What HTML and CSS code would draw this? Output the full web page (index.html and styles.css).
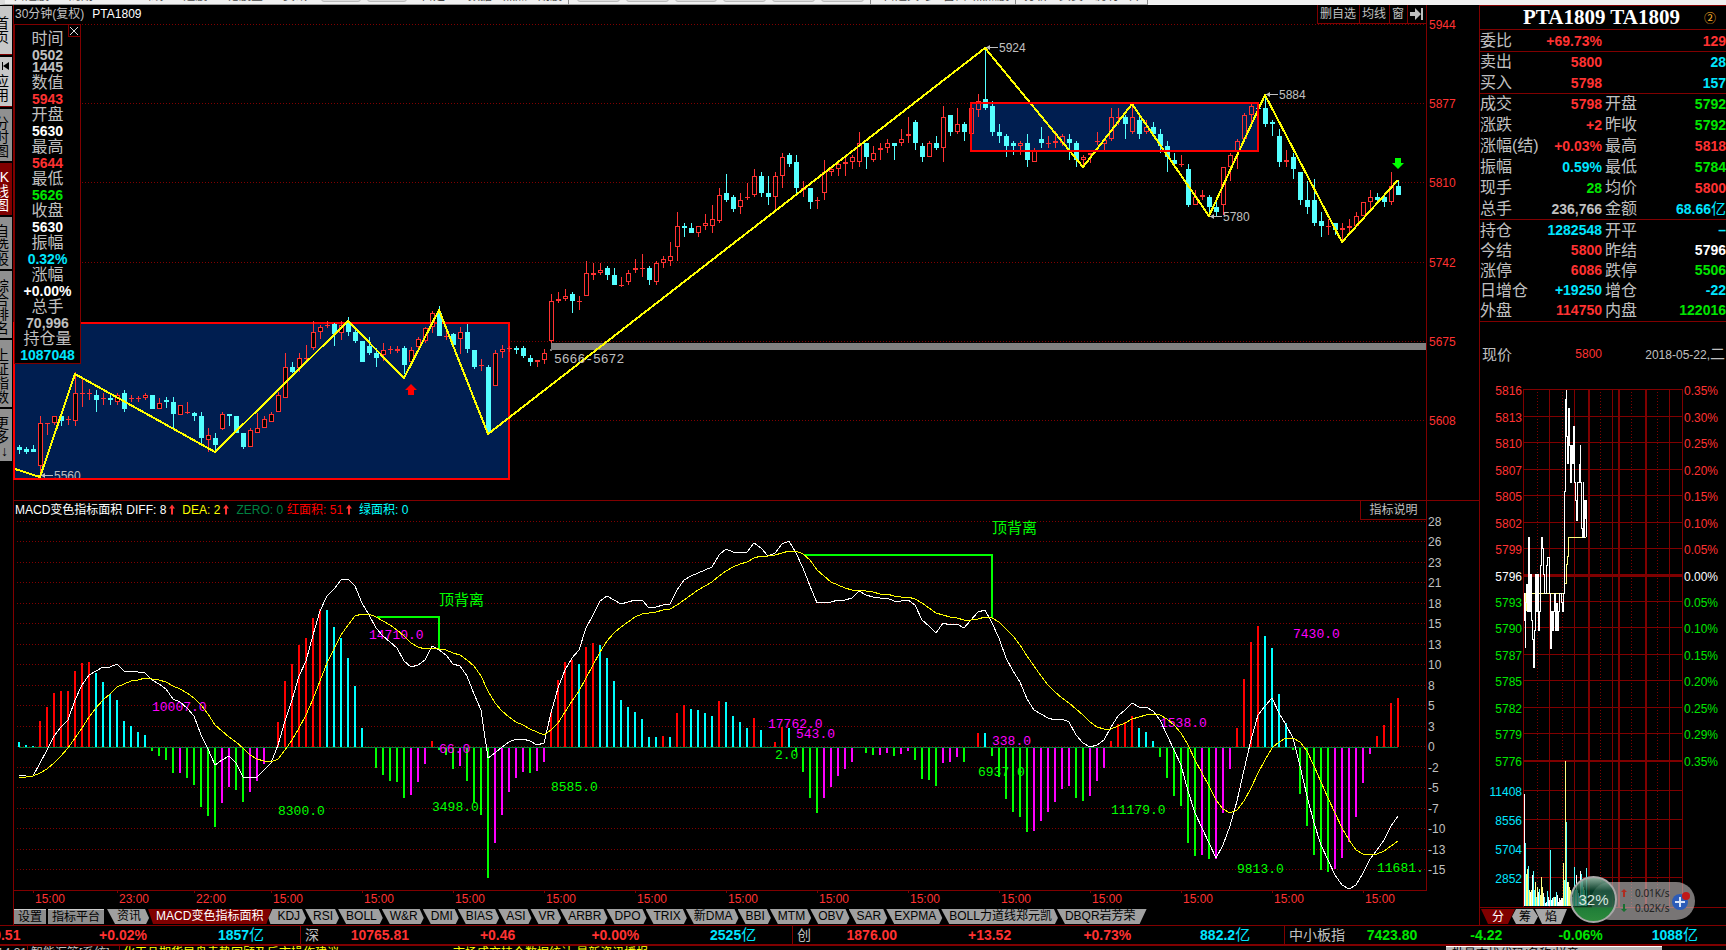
FILE: index.html
```html
<!DOCTYPE html>
<html lang="zh-CN">
<head>
<meta charset="utf-8">
<meta name="viewport" content="width=device-width, initial-scale=1">
<title>PTA1809 TA1809</title>
<link rel="stylesheet" href="styles.css">
</head>
<body>
<nav class="menubar">
  <div class="menu-group menu-main"><span>自选股</span><span>周期</span><span>1</span><span>画线</span><span>选股</span><span>论股堂</span><span>资讯</span></div>
  <div class="menu-group menu-slots"><i></i><i></i></div>
  <div class="menu-group menu-data"><span>自定义</span><span>数据</span><span>热点</span><span>期股</span></div>
  <div class="menu-group menu-slots menu-slots-wide"><i></i><i></i><i></i><i></i><i></i><i></i></div>
  <div class="menu-group menu-views"><span>自选关</span><span>多</span><span>窗口</span><span>热点股</span></div>
  <div class="menu-group menu-tail"><span>分析</span><span>买卖</span><span>说明</span><span>开</span></div>
</nav>

<main class="workspace">
  <nav class="rail">
    <button class="rail-tab light short">首<br>页</button>
    <button class="rail-tab light"><svg class="rail-icon" viewBox="0 0 8 8"><path d="M1 0h1v8H1zM8 0v8L2 4z"/></svg>应<br>用</button>
    <button class="rail-tab">分<br>时<br>图</button>
    <button class="rail-tab active">K<br>线<br>图</button>
    <button class="rail-tab">自<br>选<br>股</button>
    <button class="rail-tab tall">综<br>合<br>排<br>名</button>
    <button class="rail-tab tall">上<br>证<br>指<br>数</button>
    <button class="rail-tab">更<br>多<br>↓</button>
  </nav>

  <section class="charts">
    <header class="price-head">
      <span class="period">30分钟(复权)</span><strong class="symbol">PTA1809</strong>
      <div class="price-tools">
        <button>删自选</button><button>均线</button><button>窗</button><button aria-label="移到最后"><svg class="tool-icon" viewBox="0 0 13 12"><path d="M0 4h5V0l6 6-6 6V8H0zM11 0h2v12h-2z"/></svg></button>
      </div>
    </header>
    <div class="price-area">
      <svg id="price" class="plot"></svg>
      <aside class="datacard">
        <button class="close" aria-label="关闭"><svg viewBox="0 0 8 8"><path d="M0 0l8 8M8 0L0 8"/></svg></button>
        <dl>
          <dt>时间</dt><dd class="gray two">0502<br>1445</dd>
          <dt>数值</dt><dd class="red">5943</dd>
          <dt>开盘</dt><dd class="white">5630</dd>
          <dt>最高</dt><dd class="red">5644</dd>
          <dt>最低</dt><dd class="green">5626</dd>
          <dt>收盘</dt><dd class="white">5630</dd>
          <dt>振幅</dt><dd class="cyan">0.32%</dd>
          <dt>涨幅</dt><dd class="white">+0.00%</dd>
          <dt>总手</dt><dd class="gray">70,996</dd>
          <dt>持仓量</dt><dd class="cyan">1087048</dd>
        </dl>
      </aside>
    </div>
    <header class="macd-head">
      <span class="white">MACD变色指标面积</span>
      <span class="white">DIFF: 8<svg class="up" viewBox="0 0 6 10"><path d="M3 0l3 4H4v6H2V4H0z"/></svg></span>
      <span class="yellow">DEA: 2<svg class="up" viewBox="0 0 6 10"><path d="M3 0l3 4H4v6H2V4H0z"/></svg></span>
      <span class="dim">ZERO: 0</span>
      <span class="pure-red">红面积: 51<svg class="up" viewBox="0 0 6 10"><path d="M3 0l3 4H4v6H2V4H0z"/></svg></span>
      <span class="aqua">绿面积: 0</span>
      <button class="explain">指标说明</button>
    </header>
    <svg id="macd" class="plot"></svg>
    <nav class="tabs">
      <button class="box">设置</button><button class="box">指标平台</button>
      <button class="tab first">资讯</button><button class="tab on">MACD变色指标面积</button><button class="tab after">KDJ</button><button class="tab">RSI</button><button class="tab">BOLL</button><button class="tab">W&amp;R</button><button class="tab">DMI</button><button class="tab">BIAS</button><button class="tab">ASI</button><button class="tab">VR</button><button class="tab">ARBR</button><button class="tab">DPO</button><button class="tab">TRIX</button><button class="tab">新DMA</button><button class="tab">BBI</button><button class="tab">MTM</button><button class="tab">OBV</button><button class="tab">SAR</button><button class="tab">EXPMA</button><button class="tab">BOLL力道线郑元凯</button><button class="tab last">DBQR岩芳荣</button>
    </nav>
  </section>

  <section class="quote">
    <h1>PTA1809 TA1809<span class="badge">②</span></h1>
    <table>
      <colgroup><col class="c-name"><col class="c-val"><col class="c-name2"><col></colgroup>
      <tbody>
        <tr class="roomy"><th>委比</th><td class="red">+69.73%</td><th></th><td class="red">129</td></tr>
      </tbody>
      <tbody>
        <tr><th>卖出</th><td class="red">5800</td><th></th><td class="cyan">28</td></tr>
        <tr><th>买入</th><td class="red">5798</td><th></th><td class="cyan">157</td></tr>
      </tbody>
      <tbody>
        <tr><th>成交</th><td class="red">5798</td><th>开盘</th><td class="green">5792</td></tr>
        <tr><th>涨跌</th><td class="red">+2</td><th>昨收</th><td class="green">5792</td></tr>
        <tr><th>涨幅(结)</th><td class="red">+0.03%</td><th>最高</th><td class="red">5818</td></tr>
        <tr><th>振幅</th><td class="cyan">0.59%</td><th>最低</th><td class="green">5784</td></tr>
        <tr><th>现手</th><td class="green">28</td><th>均价</th><td class="red">5800</td></tr>
        <tr><th>总手</th><td class="gray">236,766</td><th>金额</th><td class="cyan">68.66<span class="unit">亿</span></td></tr>
      </tbody>
      <tbody class="snug">
        <tr><th>持仓</th><td class="cyan">1282548</td><th>开平</th><td class="cyan">–</td></tr>
        <tr><th>今结</th><td class="red">5800</td><th>昨结</th><td class="white">5796</td></tr>
        <tr><th>涨停</th><td class="red">6086</td><th>跌停</th><td class="green">5506</td></tr>
        <tr><th>日增仓</th><td class="cyan">+19250</td><th>增仓</th><td class="cyan">-22</td></tr>
        <tr><th>外盘</th><td class="red">114750</td><th>内盘</th><td class="green">122016</td></tr>
      </tbody>
    </table>
    <div class="now"><span class="now-name">现价</span><span class="now-val red">5800</span><span class="now-date">2018-05-22,<span class="weekday">二</span></span></div>
    <svg id="intraday" class="plot"></svg>
    <nav class="mini-tabs"><button class="on">分</button><button>筹</button><button class="end">焰</button></nav>
    <aside class="netball">
      <div class="rates">
        <span><svg class="arrow up-arrow" viewBox="0 0 6 8"><path d="M3 0l3 3H4v5H2V3H0z"/></svg>0.01K/s</span>
        <span><svg class="arrow down-arrow" viewBox="0 0 6 8"><path d="M3 8l3-3H4V0H2v5H0z"/></svg>0.02K/s</span>
      </div>
      <svg class="plus" viewBox="0 0 20 20"><circle cx="9" cy="11" r="8"/><path d="M9 6v10M4 11h10"/><circle class="dot" cx="15" cy="5" r="4"/></svg>
      <div class="ball">32%</div>
    </aside>
  </section>
</main>

<footer class="ticker">
  <div class="index-item cut"><b class="red">+0.51</b><b class="red">+0.02%</b><b class="cyan">1857<span class="unit">亿</span></b></div>
  <div class="index-item"><span>深</span><b class="red">10765.81</b><b class="red">+0.46</b><b class="red">+0.00%</b><b class="cyan">2525<span class="unit">亿</span></b></div>
  <div class="index-item"><span>创</span><b class="red">1876.00</b><b class="red">+13.52</b><b class="red">+0.73%</b><b class="cyan">882.2<span class="unit">亿</span></b></div>
  <div class="index-item wide"><span>中小板指</span><b class="green">7423.80</b><b class="green">-4.22</b><b class="green">-0.06%</b><b class="cyan">1088<span class="unit">亿</span></b></div>
</footer>
<div class="newsbar">
  <span class="news-time">14:31</span><span class="news-source">智能汇管[系统]</span>
  <span class="news-text">化工品期货早盘走势回顾及后市操作建议</span>
  <span class="news-text grow">市场成交持仓数据统计 最新资讯播报</span>
  <span class="news-box">批量查找代码/名称/拼音</span>
</div>
<script src="charts.js"></script>
</body>
</html>
```
FILE: styles.css
```css
* { box-sizing: border-box; }

:root {
  --line: #800000;
  --red: #ff3232;
  --green: #00e600;
  --cyan: #00e6ff;
  --gray: #c0c0c0;
}

body {
  margin: 0;
  min-height: 100vh;
  display: flex;
  flex-direction: column;
  overflow: hidden;
  background: #000;
  color: var(--gray);
  font: 12px/15px "Liberation Sans", "Noto Sans CJK SC", sans-serif;
}

button {
  margin: 0;
  padding: 0;
  border: 0;
  background: none;
  color: inherit;
  font: inherit;
  white-space: nowrap;
}

.red { color: var(--red); }
.green { color: var(--green); }
.cyan { color: var(--cyan); }
.gray { color: var(--gray); }
.white { color: #fff; }
.yellow { color: #ff0; }
.dim { color: #008040; }
.pure-red { color: #f00; }
.aqua { color: #0ff; }

/* menu bar */
.menubar {
  display: flex;
  align-items: flex-end;
  height: 5px;
  overflow: hidden;
  background: #f0f0f0;
  color: #444;
}
.menu-group {
  display: flex;
  align-items: flex-end;
  justify-content: space-between;
  height: 17px;
  padding: 0 6px 0 8px;
  border-bottom: 1px solid #a0a0a0;
  line-height: 16px;
  white-space: nowrap;
}
.menu-main { width: 313px; border-left: 5px solid #ddd; }
.menu-data { width: 156px; border-right: 1px solid #888; }
.menu-views { width: 145px; padding-left: 12px; border-right: 1px solid #888; }
.menu-tail { width: 132px; border-right: 1px solid #888; }
.menu-slots { gap: 6px; width: 100px; }
.menu-slots-wide { width: 302px; border-right: 1px solid #888; }
.menu-slots i { flex: 1; height: 12px; margin-bottom: 2px; border: 1px solid #bbb; border-radius: 3px; background: #ddd; }

.workspace { flex: 1; display: flex; min-height: 0; }

/* left rail: the captions run off the left edge of the window */
.rail { display: flex; flex-direction: column; gap: 2px; width: 13px; padding-top: 1px; }
.rail-tab {
  width: 12px;
  height: 52px;
  padding: 4px 3px 0 0;
  overflow: hidden;
  direction: rtl;
  background: #909090;
  color: #000;
  font-size: 14px;
  line-height: 14px;
}
.rail-tab.light { height: 50px; padding-top: 0; background: #c8c8c8; border-bottom: 1px solid var(--line); }
.rail-tab.short { height: 49px; }
.rail-tab.active { background: var(--line); color: #fff; }
.rail-tab.tall { height: 67px; }
.rail-icon { display: block; width: 8px; height: 8px; margin-bottom: 4px; }

/* chart column */
.charts {
  flex: 1;
  display: flex;
  flex-direction: column;
  min-width: 0;
  border-left: 1px solid var(--line);
}
.plot { display: block; width: 100%; min-height: 0; overflow: visible; }

.price-head { display: flex; align-items: center; gap: 8px; height: 19px; padding: 0 53px 0 1px; }
.symbol { color: #fff; font-weight: 400; }
.price-tools { display: flex; align-self: stretch; margin-left: auto; }
.price-tools button { padding: 0 3px 0 2px; border: solid var(--line); border-width: 0 0 1px 1px; line-height: 18px; }
.tool-icon { display: block; width: 13px; height: 12px; fill: var(--gray); }

.price-area { position: relative; flex: 476 1 0; min-height: 0; display: flex; }

.datacard {
  position: absolute;
  left: 0;
  top: 0;
  width: 67px;
  padding: 6px 0 0;
  border: 1px solid var(--line);
  background: #000;
  text-align: center;
}
.datacard .close {
  position: absolute;
  right: 0;
  top: 0;
  width: 12px;
  height: 12px;
  border: solid var(--line);
  border-width: 0 0 1px 1px;
  background: #000;
}
.close svg { display: block; width: 8px; height: 8px; margin: 1px; stroke: #ddd; fill: none; }
dl { margin: 0; }
dt { font-size: 16px; line-height: 16px; }
dd { margin: 0; font-size: 14px; line-height: 16px; font-weight: 700; }
dd.two { padding: 2px 0; line-height: 12px; }

.macd-head {
  display: flex;
  align-items: center;
  gap: 4px;
  height: 20px;
  padding: 0 53px 0 1px;
  border-top: 1px solid var(--line);
  line-height: 19px;
  white-space: nowrap;
}
.up { width: 6px; height: 11px; margin: 0 3px 0 3px; vertical-align: -1px; fill: var(--red); }
.explain {
  align-self: stretch;
  width: 66px;
  margin-left: auto;
  border: solid var(--line);
  border-width: 0 0 1px 1px;
}
#macd { flex: 389 1 0; }

/* indicator tabs */
.tabs { display: flex; height: 16px; padding-bottom: 1px; overflow: hidden; line-height: 15px; color: #000; }
.tabs .box { padding: 0 4px; margin-right: 2px; border-top: 1px solid #ccc; background: #8c8c8c; line-height: 14px; }
.tab {
  margin-right: -3px;
  padding: 0 8px;
  background: #a0a0a0;
  clip-path: polygon(0 0, calc(100% - 6px) 0, calc(100% - 2px) 60%, calc(100% - 5px) 100%, 8px 100%);
}
.tab.first { margin-left: 1px; padding: 0 10px; }
.tab.on {
  background: var(--line);
  color: #fff;
  clip-path: polygon(0 0, 100% 0, calc(100% - 5px) 100%, 5px 100%);
}
.tab.after { padding-left: 9px; clip-path: polygon(4px 0, calc(100% - 6px) 0, calc(100% - 2px) 60%, calc(100% - 5px) 100%, 2px 100%, 0 60%); }
.tab.last { margin-right: 0; padding-right: 11px; clip-path: polygon(0 0, 100% 0, calc(100% - 7px) 100%, 8px 100%); }

/* quote column */
.quote {
  position: relative;
  display: flex;
  flex-direction: column;
  width: 247px;
  border-left: 1px solid var(--line);
}
h1 {
  display: flex;
  align-items: center;
  justify-content: flex-end;
  gap: 24px;
  height: 24px;
  margin: 0;
  padding-right: 10px;
  border-top: 1px solid var(--line);
  color: #fff;
  font: 700 21px/23px "Liberation Serif", serif;
  white-space: nowrap;
}
.badge { color: #ffb428; font: 12px/15px "Noto Sans CJK SC", sans-serif; }

table { width: 100%; border-collapse: separate; border-spacing: 0; table-layout: fixed; }
.c-name { width: 56px; }
.c-val { width: 66px; }
.c-name2 { width: 46px; }
th, td { height: 21px; padding: 0; white-space: nowrap; line-height: 20px; }
th { text-align: left; font-size: 16px; font-weight: 400; }
th:nth-child(3) { padding-left: 3px; }
td { text-align: right; font-size: 14px; font-weight: 700; }
tbody tr:first-child > * { border-top: 1px solid var(--line); }
.roomy > * { height: 22px; }
.snug th, .snug td { height: 20px; line-height: 19px; }
.snug tr:first-child > * { height: 21px; }
.snug tr:last-child > * { height: 22px; padding-bottom: 1px; border-bottom: 1px solid var(--line); }
.unit { font-size: 15px; font-weight: 400; line-height: 14px; }

.now { display: flex; align-items: center; height: 64px; padding: 0 1px 0 2px; }
.now-name { width: 60px; font-size: 15px; }
.now-val { width: 60px; text-align: right; }
.now-date { margin-left: auto; }
.weekday { font-size: 15px; }
#intraday { flex: 521 1 0; }

.mini-tabs { display: flex; height: 18px; padding: 1px 0 1px 1px; border-top: 1px solid var(--line); color: #000; }
.mini-tabs button {
  width: 26px;
  margin-right: -3px;
  background: #a8a8a8;
  line-height: 14px;
  clip-path: polygon(4px 0, calc(100% - 5px) 0, 100% 50%, calc(100% - 4px) 100%, 4px 100%, 0 50%);
}
.mini-tabs .on { width: 34px; background: var(--line); color: #fff; clip-path: polygon(0 0, 100% 0, calc(100% - 7px) 100%, 7px 100%); }
.mini-tabs .end { width: 32px; clip-path: polygon(0 0, 100% 0, calc(100% - 6px) 100%, 7px 100%); }

/* network monitor floating over the page corner */
.netball {
  position: absolute;
  right: 31px;
  bottom: 5px;
  display: flex;
  align-items: center;
  gap: 6px;
  width: 104px;
  height: 38px;
  padding: 0 4px 0 30px;
  border-radius: 19px;
  background: rgba(200, 195, 195, .6);
  color: #222;
  font: 10px/15px "Noto Sans", sans-serif;
}
.rates { display: flex; flex-direction: column; white-space: nowrap; }
.arrow { width: 6px; height: 8px; margin-right: 8px; }
.up-arrow { fill: #b02c20; }
.down-arrow { fill: #187030; }
.plus { flex: none; width: 20px; height: 20px; margin-left: -5px; fill: #2c5cb8; stroke: #d8e4f8; stroke-width: 2; }
.plus circle { stroke: none; }
.plus .dot { fill: #c01818; }
.ball {
  position: absolute;
  left: -21px;
  top: -6px;
  width: 47px;
  height: 47px;
  border: 2px solid #a8a8a8;
  border-radius: 50%;
  background: linear-gradient(rgba(150, 190, 170, .9) 0, rgba(8, 74, 48, .8) 30%, rgba(8, 84, 48, .7) 68%, #1f7d38 69%, #2c8a3c 100%);
  color: #d8e8e0;
  font: 15px/43px "Liberation Sans", sans-serif;
  text-align: center;
}

/* index ticker */
.ticker {
  display: grid;
  grid-template-columns: 300fr 492fr 492fr 442fr;
  height: 19px;
  border-top: 1px solid var(--line);
  font-size: 14px;
  line-height: 18px;
  white-space: nowrap;
}
.index-item { display: grid; grid-template-columns: 20fr repeat(4, 118fr); padding-left: 4px; margin-right: -4px; text-align: center; border-left: 1px solid var(--line); }
.index-item > span { text-align: left; }
.index-item > b { margin-left: -4px; margin-right: 4px; }
.index-item.cut { grid-template-columns: 64fr 118fr 118fr; padding: 0; margin: 0; border: 0; overflow: hidden; }
.index-item.cut > b { margin: 0; }
.index-item.cut b:first-child { margin-left: -15px; text-align: left; }
.index-item.wide { grid-template-columns: 61fr repeat(4, 96fr); margin: 0; }

/* news strip */
.newsbar {
  display: flex;
  height: 6px;
  overflow: hidden;
  border-top: 2px solid var(--line);
  line-height: 15px;
  white-space: nowrap;
}
.news-time { width: 28px; border-right: 1px solid var(--line); overflow: hidden; direction: rtl; }
.news-source { width: 92px; padding-left: 3px; border-right: 1px solid var(--line); }
.news-text { width: 330px; padding-left: 3px; color: #ff0; }
.news-text.grow { flex: 1; }
.news-box { width: 216px; margin-right: 64px; padding-left: 6px; border-top: 1px solid #fff; background: #b8b8b8; color: #000; }

/* chart text */
svg text { font: 12px "Liberation Sans", "Noto Sans CJK SC", sans-serif; }
svg text.mono { font: 13px "Liberation Mono", monospace; }
svg text.note { font-size: 15px; }
.crisp { shape-rendering: crispEdges; }
```
FILE: charts.js
```js
const RED = '#ff3232', CYAN = '#54ffff', DARK = '#800000', GRAY = '#c0c0c0';

/* one entry per bar: colour, high, body top, body bottom, low */
const CANDLES = `c445,447,450,454 c447,449,452,454 c445,449,452,452 r416,423,466,475 r423,423,424,435 r416,416,423,425 c413,416,421,426 r416,419,420,425 r372,393,421,426 r377,393,394,407
r389,393,394,400 c390,395,400,412 r393,398,399,405 c395,398,400,405 r393,395,402,405 c390,393,409,412 r395,398,399,402 r396,398,399,402 r393,395,398,400 c395,395,409,409
r398,403,409,409 c397,400,402,408 c397,402,414,428 r405,405,415,415 r402,412,413,414 c412,413,416,421 c412,416,438,443 r428,435,440,452 c433,438,445,450 r412,414,429,430
c414,414,416,426 c416,416,433,433 c433,433,447,449 r428,430,447,447 r413,428,433,433 r416,419,428,428 r412,414,422,422 r392,395,412,412 r353,367,398,398 c362,367,372,373
r353,358,368,372 r345,358,359,360 r321,332,348,350 r325,327,332,339 r321,325,326,328 c323,324,334,346 r321,325,333,340 c317,323,332,336 c328,332,341,343 c341,341,362,362
c337,346,353,355 c348,353,358,367 r343,350,355,361 r346,349,350,354 r346,349,351,353 c346,348,365,374 r347,350,362,363 r337,339,347,350 r327,328,341,343 r311,313,327,333
c306,313,336,336 r329,336,337,340 c333,334,345,348 r327,332,339,354 c324,332,349,353 c350,350,367,369 r359,365,366,371 c365,367,433,434 r350,353,386,386 r345,349,352,358
r346,348,349,352 c346,348,350,354 c346,348,356,358 c355,358,362,366 r360,360,362,367 r349,353,360,364 r294,301,341,343 r292,299,301,303 r289,296,299,301 c292,294,301,313
r296,301,302,310 r261,273,296,296 r263,273,275,280 r263,270,273,275 c266,268,275,280 c268,275,285,285 r277,285,286,287 r270,273,282,285 r259,268,270,273 r254,268,269,277
c266,268,280,285 r261,263,282,285 r256,259,263,268 r242,256,261,266 r212,226,247,261 c223,226,228,237 c223,228,233,233 r226,226,233,237 r214,223,226,230 r205,219,226,233
r188,195,221,223 c174,193,200,202 c195,197,209,212 r193,200,207,214 r183,197,198,200 r169,176,195,197 c172,176,193,197 c176,193,197,205 r172,176,197,211 r153,157,176,188
c153,155,164,167 c155,162,188,193 r181,188,190,197 c188,188,202,209 r197,200,201,209 r160,172,193,200 r167,169,172,176 r160,164,169,176 r158,162,164,176 r155,157,162,169
r132,143,162,167 c143,143,157,169 r146,153,160,162 r143,148,150,160 r139,143,148,153 c143,143,146,160 r129,139,143,146 r117,134,136,143 c120,122,143,150 c143,146,157,162
r141,143,157,157 c136,143,148,150 r106,117,148,162 c115,115,132,136 r108,124,132,134 c122,124,132,141 r108,108,134,134 r94,101,110,117 c48,99,108,110 c101,106,132,136
c124,132,136,143 c134,136,146,157 c141,143,146,155 r141,143,146,155 c134,143,160,167 r148,151,162,162 c127,139,143,148 r136,143,144,148 r131,141,143,148 r134,136,143,146
c134,139,143,160 c141,143,160,167 r155,157,160,167 r153,153,155,163 r132,141,142,145 r139,140,144,150 r108,117,139,141 r108,117,118,125 c115,117,124,139 r104,117,132,134
c117,120,134,139 r120,127,132,134 c122,127,134,136 c129,134,146,153 c141,146,157,172 c153,160,164,164 r155,164,165,167 c164,169,205,207 r190,197,205,205 r190,195,197,200
c195,197,207,215 c197,207,212,216 r167,167,205,215 r153,155,167,181 r139,141,152,169 r113,115,139,139 r104,106,115,125 c104,108,109,110 c95,108,124,127 c120,122,124,136
c129,136,162,167 r150,160,162,167 c153,157,169,179 c172,172,200,205 c181,200,207,214 c179,200,223,226 c212,221,226,237 r219,226,227,235 c223,223,230,235 r223,228,230,242
r219,226,228,233 r212,216,226,226 r202,202,216,216 r190,197,202,210 c193,197,200,202 c195,197,202,207 r172,186,202,205 c180,186,195,195`.split(/\s+/);

const SWINGS = [[15, 469], [40, 477], [75, 374], [215, 452], [348, 321], [404, 378], [439, 310], [488, 434],
  [985, 48], [1083, 167], [1132, 104], [1209, 216], [1265, 95], [1342, 242], [1398, 180]];

/* histogram: colour and signed height above the zero line */
const HIST = `c5 c2 c1 r26 r40 r54 r56 r56 r76 r84 r85 c74 c65 c53 c47 c26 c21 c15 c12 g-4
g-9 g-13 g-26 m-26 g-31 g-38 g-60 g-69 g-80 m-56 m-40 g-43 g-55 m-45 m-34 m-17 m-1 r25 r66 r83
r102 r109 r129 r138 c137 c120 c109 c89 c61 c19 g-1 g-21 g-28 g-34 g-35 g-51 m-48 m-35 m-17 r6
g-3 g-8 g-22 m-19 g-34 g-56 g-68 g-131 m-96 m-68 m-45 m-31 m-25 g-26 m-24 m-15 r35 r67 r85 r87
c83 r100 r104 c102 c89 c66 c47 c40 c35 c28 c10 c10 r11 c10 r34 r42 c38 c37 c34 c31
r46 c45 c31 c25 c19 r29 c17 r0 r5 r20 c19 g-5 g-25 g-51 g-66 m-51 m-40 m-29 m-22 m-15
m-1 g-6 g-8 m-8 m-6 g-9 m-7 m-4 g-13 g-32 g-33 g-39 m-16 m-15 m-10 g-15 r0 r14 c14 g-9
g-30 g-52 g-65 g-70 g-85 m-84 m-74 m-65 m-55 m-42 m-39 g-51 g-54 m-49 m-34 m-21 r6 r23 r25 r31
c19 c15 c6 g-10 g-31 g-49 g-59 g-96 g-109 m-108 g-112 m-112 m-66 m-22 r19 r68 r105 r121 c111 c99
c53 c24 g-3 g-47 g-79 g-108 g-123 g-125 m-122 m-111 m-95 m-70 m-36 m-7 r11 r22 r44 r49`.split(/\s+/);
const HIST_FILL = { r: '#f00', c: '#0ff', g: '#0f0', m: '#f0f' };

const DIFF = [-28, -29, -29, -16, -3, 11, 20, 27, 47, 62, 72, 76, 80, 80, 83, 76, 76, 75, 74, 67,
  63, 58, 48, 45, 39, 31, 12, -2, -18, -13, -9, -16, -30, -31, -30, -23, -16, 2, 26, 47,
  71, 86, 112, 136, 151, 158, 167, 168, 161, 144, 132, 119, 111, 105, 99, 86, 80, 82, 87, 101,
  97, 92, 83, 81, 71, 53, 37, -11, -6, 0, 5, 8, 8, 6, 2, 4, 34, 59, 77, 89,
  97, 119, 132, 146, 151, 147, 143, 145, 147, 147, 139, 140, 142, 143, 157, 167, 171, 174, 177, 180,
  192, 198, 195, 195, 195, 204, 199, 191, 194, 203, 206, 194, 179, 161, 144, 145, 145, 147, 147, 149,
  156, 152, 150, 149, 149, 146, 146, 147, 142, 127, 121, 114, 124, 122, 123, 119, 127, 135, 137, 124,
  109, 89, 76, 65, 48, 37, 33, 29, 27, 28, 25, 12, 4, 0, 2, 7, 20, 31, 37, 44,
  40, 40, 36, 27, 12, -3, -18, -44, -66, -81, -96, -111, -98, -79, -54, -23, 7, 32, 41, 49,
  34, 22, 9, -19, -49, -76, -98, -113, -128, -138, -142, -138, -126, -112, -103, -93, -79, -69];
const DEA = [-30, -30, -29, -26, -22, -16, -9, -1, 9, 19, 30, 39, 47, 53, 60, 63, 66, 67, 69, 68,
  67, 65, 61, 58, 54, 49, 42, 33, 22, 16, 10, 5, -1, -8, -12, -14, -15, -12, -3, 7,
  19, 32, 48, 66, 84, 98, 112, 122, 131, 133, 133, 130, 126, 122, 117, 111, 104, 100, 98, 99,
  98, 97, 94, 92, 87, 81, 71, 56, 44, 36, 30, 25, 22, 18, 15, 12, 17, 24, 35, 46,
  56, 69, 82, 95, 106, 114, 120, 125, 130, 133, 134, 135, 137, 138, 142, 147, 152, 157, 161, 165,
  171, 176, 180, 183, 185, 189, 191, 191, 192, 194, 196, 196, 193, 187, 177, 171, 165, 162, 159, 157,
  157, 156, 155, 153, 153, 151, 150, 150, 148, 144, 139, 134, 132, 130, 129, 127, 127, 128, 130, 129,
  125, 118, 111, 102, 91, 81, 71, 62, 55, 49, 44, 38, 32, 25, 20, 18, 18, 21, 24, 28,
  30, 32, 33, 32, 28, 22, 14, 2, -13, -26, -39, -53, -62, -66, -63, -54, -41, -26, -13, -1,
  5, 9, 9, 5, -4, -19, -35, -51, -66, -81, -93, -103, -107, -108, -107, -104, -99, -94];

const barX = i => 19 + 7 * i;

/* Collects shapes given in layout units and scales their positions to the element's size. */
class Pen {
  constructor(id, x0, y0, w, h) {
    this.el = document.getElementById(id);
    const box = this.el.getBoundingClientRect();
    this.x0 = x0; this.y0 = y0;
    this.kx = Math.abs(box.width - w) < 2 ? 1 : box.width / w;
    this.ky = Math.abs(box.height - h) < 2 ? 1 : box.height / h;
    this.out = [];
  }
  X(x) { return +((x - this.x0) * this.kx).toFixed(1); }
  Y(y) { return +((y - this.y0) * this.ky).toFixed(1); }
  rect(x, y, w, h, fill, extra = '') {
    this.out.push(`<rect class="crisp" x="${this.X(x)}" y="${this.Y(y)}" width="${w}" height="${h}" fill="${fill}" ${extra}/>`);
  }
  h(x1, x2, y, color, width = 1, dash = '') {
    this.out.push(`<path class="crisp" d="M${this.X(x1)} ${this.Y(y) + .5}H${this.X(x2)}" stroke="${color}" stroke-width="${width}" stroke-dasharray="${dash}"/>`);
  }
  v(x, y1, y2, color, width = 1, dash = '') {
    this.out.push(`<path class="crisp" d="M${this.X(x) + .5} ${this.Y(y1)}V${this.Y(y2)}" stroke="${color}" stroke-width="${width}" stroke-dasharray="${dash}"/>`);
  }
  line(points, color, width = 1) {
    const d = points.map(([x, y]) => `${this.X(x)},${this.Y(y)}`).join(' ');
    this.out.push(`<polyline class="crisp" points="${d}" fill="none" stroke="${color}" stroke-width="${width}"/>`);
  }
  text(x, y, s, color, cls = '', anchor = 'start') {
    this.out.push(`<text x="${this.X(x)}" y="${this.Y(y)}" fill="${color}" class="${cls}" text-anchor="${anchor}">${s}</text>`);
  }
  shape(x, y, d, color) {
    this.out.push(`<path transform="translate(${this.X(x)} ${this.Y(y)})" d="${d}" fill="${color}"/>`);
  }
  done() { this.el.innerHTML = this.out.join(''); }
}

function drawPrice() {
  const p = new Pen('price', 14, 24, 1465, 476);
  const levels = [[24, 5944], [103, 5877], [182, 5810], [262, 5742], [341, 5675], [420, 5608]];
  levels.forEach(([y]) => p.h(16, 1426, y, DARK, 1, '1 2'));
  p.v(1426, 5, 500, DARK);
  levels.forEach(([y, s]) => p.text(1429, y + 5, s, RED));

  const zone = (x1, y1, x2, y2) => {
    p.rect(x1, y1, p.X(x2) - p.X(x1), p.Y(y2) - p.Y(y1), '#001e50', 'stroke="#f00" stroke-width="2"');
  };
  zone(14, 323, 509, 479);
  zone(971, 103, 1258, 151);
  p.rect(551, 343, p.X(1426) - p.X(551), 7, '#808080');
  p.rect(550, 349, 2, 2, '#808080');

  CANDLES.forEach((c, i) => {
    const x = barX(i), [hi, top, bot, lo] = c.slice(1).split(',').map(Number);
    if (c[0] === 'c') {
      p.v(x, hi, lo, CYAN);
      p.rect(x - 2, top, 5, Math.max(1, p.Y(bot) - p.Y(top)), CYAN);
    } else {
      p.v(x, hi, top, RED);
      p.v(x, bot, lo, RED);
      if (bot - top < 3) p.rect(x - 2, top, 5, bot - top, RED);
      else {
        const fill = i < 71 ? '#000' : 'none';
        p.rect(x - 1.5, top + .5, 4, p.Y(bot) - p.Y(top) - 1, fill, `stroke="${RED}"`);
      }
    }
  });
  p.line(SWINGS, '#ff0', 2);
  p.rect(971, 103, p.X(1258) - p.X(971), p.Y(151) - p.Y(103), 'none', 'stroke="#f00" stroke-width="2"');

  [[41, 475, 5560], [986, 47, 5924], [1266, 94, 5884], [1210, 216, 5780]].forEach(([x, y, s]) => {
    p.h(x, x + 12, y, GRAY);
    p.shape(x, y, 'M0 .5L4-2V3z', GRAY);
    p.text(x + 13, y + 5, s, GRAY);
  });
  p.h(14, 509, 478.5, '#f00', 2);
  p.text(554, 363, '5666-5672', GRAY, 'mono');
  p.shape(411, 384, 'M0 0L6 6H3V11H-3V6H-6z', '#f00');
  p.shape(1398, 169, 'M0 0L6-6H3V-11H-3V-6H-6z', '#0f0');
  p.done();
}

function drawMacd() {
  const p = new Pen('macd', 14, 520, 1465, 389);
  const zero = 747;
  const levels = [[521, 28], [541, 26], [562, 23], [582, 21], [603, 18], [623, 15], [644, 13], [664, 10], [685, 8],
    [705, 5], [726, 3], [746, 0], [767, -2], [787, -5], [808, -7], [828, -10], [849, -13], [869, -15]];
  levels.forEach(([y, s]) => {
    p.h(17, 1426, y, DARK, 1, '1 2');
    p.text(1428, y + 5, s, GRAY);
  });
  p.v(1426, 500, 890, DARK);
  p.h(14, 1427, 890, DARK);

  HIST.forEach((b, i) => {
    const v = Number(b.slice(1));
    if (v) p.rect(barX(i) - 1, v > 0 ? zero - v : zero, 2, Math.abs(v) * p.ky, HIST_FILL[b[0]]);
  });
  p.h(19, 1398, zero, '#008040');

  [[152, 711, '10007.0', 1], [369, 639, '14710.0', 1], [278, 815, '8300.0', 0], [432, 811, '3498.0', 0],
    [439, 753, '66.0', 1], [551, 791, '8585.0', 0], [768, 728, '17762.0', 1], [796, 738, '543.0', 1],
    [775, 759, '2.0', 0], [992, 745, '338.0', 1], [978, 776, '6937.0', 0], [1160, 727, '1538.0', 1],
    [1293, 638, '7430.0', 1], [1111, 814, '11179.0', 0], [1237, 873, '9813.0', 0], [1377, 872, '11681.', 0]
  ].forEach(([x, y, s, up]) => p.text(x, y, s, up ? '#f0f' : '#0f0', 'mono'));

  p.line([[377, 617], [439, 617], [439, 649]], '#0f0', 2);
  p.line([[804, 555], [992, 555], [992, 618]], '#0f0', 2);
  p.text(439, 605, '顶背离', '#0f0', 'note');
  p.text(992, 533, '顶背离', '#0f0', 'note');

  p.line(DIFF.map((v, i) => [barX(i), zero - v]), '#fff');
  p.line(DEA.map((v, i) => [barX(i), zero - v]), '#ff0');

  const times = ['15:00', '23:00', '22:00'];
  [33, 117, 194, 271, 362, 453, 544, 635, 726, 817, 908, 999, 1090, 1181, 1272, 1363].forEach((x, i) => {
    p.v(x, 890, 893, DARK);
    p.text(x + 2, 903, times[i] || '15:00', RED);
  });
  p.done();
}

function drawIntraday() {
  const p = new Pen('intraday', 1480, 386, 246, 521);
  const G = '#00e600', W = '#fff', C = '#00e6ff';
  [[389, 5816, '0.35%', RED], [416, 5813, '0.30%', RED], [442, 5810, '0.25%', RED], [469, 5807, '0.20%', RED],
    [495, 5805, '0.15%', RED], [522, 5802, '0.10%', RED], [548, 5799, '0.05%', RED], [575, 5796, '0.00%', W, 3],
    [601, 5793, '0.05%', G], [627, 5790, '0.10%', G], [654, 5787, '0.15%', G], [680, 5785, '0.20%', G],
    [707, 5782, '0.25%', G], [733, 5779, '0.29%', G], [760, 5776, '0.35%', G, 2], [790, 11408, '', C],
    [819, 8556, '', C], [848, 5704, '', C], [877, 2852, '', C]
  ].forEach(([y, price, pct, color, width = 1]) => {
    p.h(1523, 1683, y, DARK, width);
    p.text(1522, y + 6, price, color, '', 'end');
    p.text(1684, y + 6, pct, color);
  });
  [[1523], [1537, 1, '1 2'], [1549], [1562, 1, '1 2'], [1574], [1588, 2], [1600, 1, '1 2'], [1612], [1618, 2],
    [1631, 1, '1 2'], [1645, 2], [1657, 1, '1 2'], [1669], [1682]
  ].forEach(([x, width = 1, dash = '']) => p.v(x, 389, 907, DARK, width, dash));

  /* traded volume, one bar per minute step */
  const volume = `w112 c63 y32 y37 c40 y16 w14 y16 w31 c35 c16 y24 c9 y19 w14 c17 y11 y29 y19 w13 c9 w3 w4 c15 w9 w6 c56 w6 w8 c9 y9
w9 c14 w11 w4 w8 w6 w8 w8 y43 c26 y145 c84 w24 y24 y19 y16 w9 w9 w16 c39 w16 w31 c16 w13 w9 w35 c32 c26 y19 c16 w9 c38`.split(/\s+/);
  const fills = { w: '#fff', c: '#54ffff', y: '#ffff80' };
  volume.forEach((b, i) => p.rect(1524 + i, 906 - b.slice(1), 1, b.slice(1) * p.ky, fills[b[0]]));

  p.line([[1524, 593], [1564, 593], [1564, 583], [1566, 583], [1566, 564], [1567, 564], [1567, 556], [1568, 556],
    [1568, 537], [1586, 537]], '#ffff80');
  p.rect(1525, 593, 2, 18, '#ffff80');
  const ticks = [[0, 593], [0, 620], [1, 648], [1, 602], [2, 584], [3, 611], [4, 537], [5, 611], [6, 574], [7, 593], [7, 620],
    [8, 639], [9, 667], [10, 630], [11, 574], [12, 611], [13, 574], [14, 630], [15, 611], [16, 565], [17, 537], [18, 548],
    [19, 574], [20, 593], [22, 565], [23, 557], [24, 557], [25, 593], [26, 648], [27, 611], [28, 630], [29, 611], [30, 593],
    [31, 630], [32, 603], [33, 630], [34, 611], [35, 593], [37, 602], [38, 611], [39, 593], [40, 520], [40, 491], [41, 399],
    [42, 390], [42, 436], [43, 463], [44, 408], [45, 445], [46, 482], [47, 445], [48, 463], [49, 426], [50, 482], [51, 500],
    [52, 520], [53, 482], [55, 464], [56, 445], [56, 482], [57, 528], [58, 537], [59, 482], [59, 537], [60, 500], [61, 519],
    [61, 500], [62, 519], [62, 537]];
  const steps = [];
  ticks.forEach(([m, y], i) => {
    if (i) steps.push([1524.5 + m, ticks[i - 1][1]]);
    steps.push([1524.5 + m, y]);
  });
  p.line(steps, '#fff');
  p.done();
}

function drawAll() {
  drawPrice();
  drawMacd();
  drawIntraday();
}
drawAll();
window.addEventListener('resize', drawAll);
```
